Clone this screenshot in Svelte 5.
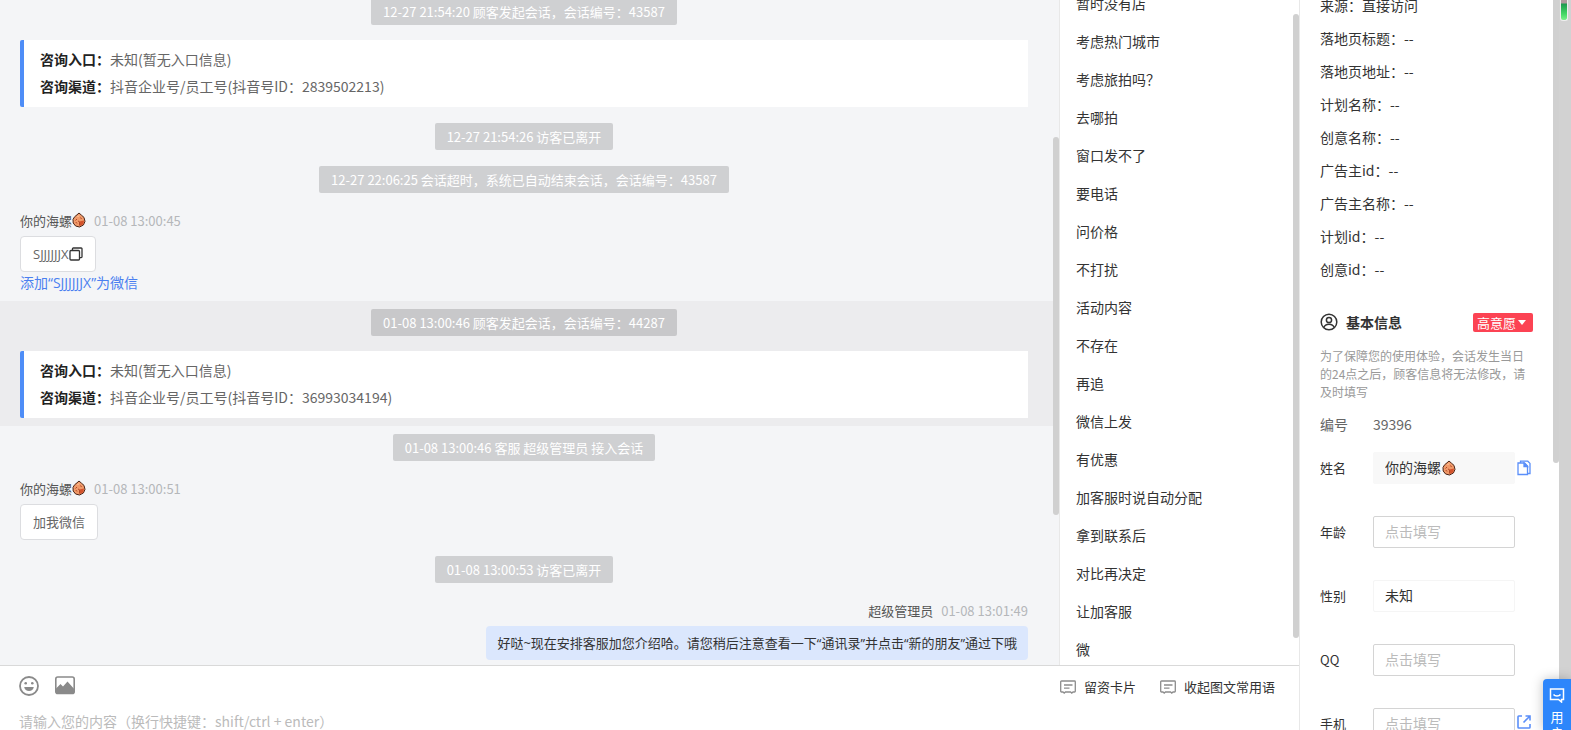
<script lang="ts">
  let draft = '';
  let nickname = '你的海螺';
  let gender = '未知';

  const entries = [
    { kind: 'notice', text: '12-27 21:54:20 顾客发起会话，会话编号：43587' },
    { kind: 'source', id: '2839502213' },
    { kind: 'notice', text: '12-27 21:54:26 访客已离开' },
    { kind: 'notice', text: '12-27 22:06:25 会话超时，系统已自动结束会话，会话编号：43587' },
    { kind: 'guest', time: '01-08 13:00:45', text: 'SJJJJJJX', contact: true },
    { kind: 'notice', text: '01-08 13:00:46 顾客发起会话，会话编号：44287', active: true },
    { kind: 'source', id: '36993034194', active: true },
    { kind: 'notice', text: '01-08 13:00:46 客服 超级管理员 接入会话' },
    { kind: 'guest', time: '01-08 13:00:51', text: '加我微信' },
    { kind: 'notice', text: '01-08 13:00:53 访客已离开' },
    {
      kind: 'staff',
      time: '01-08 13:01:49',
      text: '好哒~现在安排客服加您介绍哈。请您稍后注意查看一下“通讯录”并点击“新的朋友”通过下哦',
    },
  ];

  const phrases = [
    '暂时没有店',
    '考虑热门城市',
    '考虑旅拍吗？',
    '去哪拍',
    '窗口发不了',
    '要电话',
    '问价格',
    '不打扰',
    '活动内容',
    '不存在',
    '再追',
    '微信上发',
    '有优惠',
    '加客服时说自动分配',
    '拿到联系后',
    '对比再决定',
    '让加客服',
    '微',
  ];

  const visit = [
    ['来源', '直接访问'],
    ['落地页标题', '--'],
    ['落地页地址', '--'],
    ['计划名称', '--'],
    ['创意名称', '--'],
    ['广告主id', '--'],
    ['广告主名称', '--'],
    ['计划id', '--'],
    ['创意id', '--'],
  ];
</script>

{#snippet shell()}
  <svg class="shell" viewBox="0 0 14 16" width="14" height="16">
    <path
      d="M7 1 9.500 3.200 12 5.400l1 4-1.600 3.600L7.500 15 3.600 14 1.200 11 1 7.400 2.600 4.800 5 2.800z"
      fill="#f09a6a"
      stroke="#4a2416"
    />
    <path d="M7.500 9.500 12 8.500l-.6 3.800L7.800 14z" fill="#d4532c" />
    <path d="M3.500 8.500 5 7M5 11.500 3.800 10M8.500 5.500l1 1.500M7.500 9.500v4M6 9l1 .5" stroke="#b0492a" fill="none" />
    <path d="M5.500 5 7 3.500" stroke="#ffd3ac" fill="none" />
  </svg>
{/snippet}

{#snippet cardIcon()}
  <svg viewBox="0 0 16 16" width="16" height="16" fill="none" stroke="#8c8c8c" stroke-width="1.3">
    <path d="M1.500 2h13a.8.8 0 0 1 .8.8v9.400a.8.8 0 0 1-.8.8h-1.500l-1.200 1.200L10.600 13H5.400l-1.200 1.200L3 13H1.500a.8.8 0 0 1-.8-.8V2.800A.8.8 0 0 1 1.500 2z" />
    <path d="M4 6h8.500M4 9.200h5.500" />
  </svg>
{/snippet}

<div class="app">
  <main>
    <div class="top">
      <section class="chat">
        <div class="stream">
          {#each entries as entry}
            <div class="row {entry.kind}" class:active={entry.active}>
              {#if entry.kind === 'notice'}
                <span class="pill">{entry.text}</span>
              {:else if entry.kind === 'source'}
                <div class="card">
                  <p><b>咨询入口：</b>未知(暂无入口信息)</p>
                  <p><b>咨询渠道：</b>抖音企业号/员工号(抖音号ID：{entry.id})</p>
                </div>
              {:else}
                <div class="meta">
                  {#if entry.kind === 'guest'}
                    <span>你的海螺</span>{@render shell()}
                  {:else}
                    <span>超级管理员</span>
                  {/if}
                  <time>{entry.time}</time>
                </div>
                <div class="bubble">
                  {entry.text}{#if entry.contact}<button class="copy" aria-label="复制">
                      <svg viewBox="0 0 14 14" width="14" height="14" fill="none" stroke="#333" stroke-width="1.3">
                        <rect x="1" y="3.500" width="9.500" height="9.500" rx="1" />
                        <path d="M3.500 3.500V1.800A.8.8 0 0 1 4.300 1h7.900a.8.8 0 0 1 .8.8v8a.8.8 0 0 1-.8.8h-1.700" />
                      </svg>
                    </button>{/if}
                </div>
                {#if entry.contact}
                  <a href="#wechat">添加“{entry.text}”为微信</a>
                {/if}
              {/if}
            </div>
          {/each}
        </div>
        <i class="thumb chat-thumb"></i>
      </section>

      <aside class="phrases">
        <ul>
          {#each phrases as phrase}
            <li><button>{phrase}</button></li>
          {/each}
        </ul>
        <i class="thumb phrase-thumb"></i>
      </aside>
    </div>

    <footer>
      <div class="tools">
        <button aria-label="表情">
          <svg viewBox="0 0 20 20" width="20" height="20" fill="none" stroke="#8a8a8a" stroke-width="1.800">
            <circle cx="10" cy="10" r="9" />
            <circle cx="6.700" cy="7.300" r="1.300" fill="#8a8a8a" stroke="none" />
            <circle cx="13.300" cy="7.300" r="1.300" fill="#8a8a8a" stroke="none" />
            <path d="M5.200 11h9.600c-.4 2.500-2.300 4-4.800 4s-4.400-1.500-4.800-4z" fill="#8a8a8a" stroke="none" />
          </svg>
        </button>
        <button aria-label="图片">
          <svg viewBox="0 0 20 20" width="20" height="20">
            <rect x=".8" y="1" width="18.400" height="16.400" rx="2" fill="none" stroke="#8a8a8a" stroke-width="1.600" />
            <path d="M1 12.500 5.500 8l2.500 2.500L12.500 5.500l6.700 7.500v4.500H1z" fill="#8a8a8a" />
          </svg>
        </button>
        <span class="spacer"></span>
        <button class="text">{@render cardIcon()}留资卡片</button>
        <button class="text">{@render cardIcon()}收起图文常用语</button>
      </div>
      <textarea
        bind:value={draft}
        rows="1"
        aria-label="消息"
        placeholder="请输入您的内容（换行快捷键：shift/ctrl + enter）"
      ></textarea>
    </footer>
  </main>

  <aside class="info">
    <dl class="visit">
      {#each visit as [name, value]}
        <div><dt>{name}：</dt><dd>{value}</dd></div>
      {/each}
    </dl>

    <header>
      <svg viewBox="0 0 18 18" width="18" height="18" fill="none" stroke="#333" stroke-width="1.500">
        <circle cx="9" cy="9" r="7.800" />
        <circle cx="9" cy="7" r="2.600" />
        <path d="M3.800 14.500c.8-2.200 2.700-3.300 5.200-3.300s4.400 1.100 5.200 3.300" />
      </svg>
      <h2>基本信息</h2>
      <button class="tag">高意愿<i></i></button>
    </header>
    <p class="hint">为了保障您的使用体验，会话发生当日的24点之后，顾客信息将无法修改，请及时填写</p>
    <p class="number"><span>编号</span>39396</p>

    <form>
      <div class="field">
        <label for="nickname">姓名</label>
        <div class="control">
          <input id="nickname" class="filled" bind:value={nickname} />
          <span class="suffix">{@render shell()}</span>
        </div>
        <button type="button" aria-label="复制姓名">
          <svg viewBox="0 0 14 16" width="14" height="16" fill="none" stroke="#5b8ff9" stroke-width="1.300">
            <path d="M1 3h6.500L10.500 6v8.500H1z" />
            <path d="M7 3v3.500h3.500z" fill="#5b8ff9" />
            <path d="M3.500 3V1.200h7.300L13 3.400V13.500h-2.500" />
          </svg>
        </button>
      </div>
      <div class="field">
        <label for="age">年龄</label>
        <div class="control"><input id="age" placeholder="点击填写" /></div>
      </div>
      <div class="field">
        <label for="gender">性别</label>
        <div class="control">
          <select id="gender" bind:value={gender}>
            <option>未知</option>
            <option>男</option>
            <option>女</option>
          </select>
        </div>
      </div>
      <div class="field">
        <label for="qq">QQ</label>
        <div class="control"><input id="qq" placeholder="点击填写" /></div>
      </div>
      <div class="field">
        <label for="phone">手机</label>
        <div class="control"><input id="phone" placeholder="点击填写" /></div>
        <button type="button" aria-label="查看手机">
          <svg viewBox="0 0 14 18" width="14" height="18" fill="none" stroke="#5b8ff9" stroke-width="1.600">
            <path d="M5 1H1.800a.8.8 0 0 0-.8.8v10.400a.8.8 0 0 0 .8.8h10.400a.8.8 0 0 0 .8-.8V9" />
            <path d="M8.500 1H13v4.500M13 1 6.500 7.500" />
          </svg>
        </button>
      </div>
    </form>
    <i class="thumb info-thumb"></i>
  </aside>

  <div class="edge"><i class="battery"></i></div>

  <button class="feedback">
    <svg viewBox="0 0 16 16" width="16" height="16" fill="none" stroke="#fff" stroke-width="1.500">
      <path d="M1.500 2h13v10.500h-2V15l-3-2.500h-8z" />
      <path d="M4.500 7.500c1.500 2 5.500 2 7 0" />
    </svg>
    <span>用</span><span>户</span>
  </button>
</div>

<style>
  :global(body) {
    margin: 0;
    overflow: hidden;
  }
  .app,
  .app button,
  .app input,
  .app select,
  .app textarea {
    font-family: 'Noto Sans CJK SC', 'Open Sans', sans-serif;
    font-size: 14px;
  }
  .app {
    display: flex;
    position: relative;
    height: 100vh;
    overflow: hidden;
    color: #333;
    background: #fff;
  }
  button {
    padding: 0;
    border: 0;
    background: none;
    color: inherit;
    cursor: pointer;
  }
  svg {
    display: block;
    flex: none;
  }
  p,
  h2,
  ul,
  dl,
  dd {
    margin: 0;
    padding: 0;
  }
  .thumb {
    position: absolute;
    right: 0;
    width: 6px;
    border-radius: 3px;
    background: #d0d0d0;
  }
  main {
    display: flex;
    flex-direction: column;
    flex: 1;
    min-width: 0;
    border-right: 1px solid #e8e8e8;
  }
  .top {
    display: flex;
    flex: 1;
    min-height: 0;
  }

  /* conversation */
  .chat {
    position: relative;
    flex: 1;
    overflow: hidden;
    background: #f4f5f7;
  }
  .stream {
    margin-top: -10px;
  }
  .row {
    display: flex;
    flex-direction: column;
    align-items: flex-start;
    padding: 8px 31px 8px 20px;
  }
  .row.active {
    background: #ececee;
  }
  .row.notice {
    align-items: center;
  }
  .row.source {
    padding-top: 7px;
  }
  .row.staff {
    align-items: flex-end;
  }
  .pill {
    padding: 0 12px;
    border-radius: 2px;
    background: rgba(0, 0, 0, 0.15);
    color: #fff;
    font-size: 13px;
    line-height: 27px;
  }
  .card {
    align-self: stretch;
    padding: 6px 16px 7px;
    border-left: 4px solid #4e8df7;
    border-radius: 2px 0 0 2px;
    background: #fff;
    color: #666;
    line-height: 27px;
  }
  .card b {
    color: #222;
  }
  .meta {
    display: flex;
    align-items: center;
    height: 22px;
    margin-bottom: 5px;
    color: #555;
    font-size: 13px;
  }
  .meta time {
    margin-left: 8px;
    color: #b5b7ba;
  }
  .bubble {
    display: flex;
    align-items: center;
    padding: 0 12px;
    border: 1px solid #dcdde0;
    border-radius: 4px;
    background: #fff;
    color: #666;
    font-family: 'Open Sans', 'Noto Sans CJK SC', sans-serif;
    font-size: 13px;
    line-height: 34px;
  }
  .staff .bubble {
    padding: 0 11px;
    border: 0;
    background: #dbe7fd;
    color: #333;
  }
  .row a {
    color: #4a7ff0;
    font-family: 'Open Sans', 'Noto Sans CJK SC', sans-serif;
    line-height: 21px;
    text-decoration: none;
  }
  .chat-thumb {
    top: 137px;
    height: 378px;
  }

  /* quick phrases */
  .phrases {
    position: relative;
    flex: none;
    box-sizing: border-box;
    width: 240px;
    overflow: hidden;
    border-left: 1px solid #e8e8e8;
  }
  .phrases ul {
    margin-top: -16px;
    list-style: none;
  }
  .phrases button {
    width: 100%;
    padding: 0 16px;
    line-height: 38px;
    text-align: left;
  }
  .phrases li {
    height: 38px;
  }
  .phrase-thumb {
    top: 14px;
    height: 624px;
  }

  /* composer */
  footer {
    box-sizing: border-box;
    height: 65px;
    overflow: hidden;
    border-top: 1px solid #d9d9d9;
  }
  .tools {
    display: flex;
    align-items: center;
    gap: 16px;
    height: 39px;
    padding: 0 24px 0 19px;
  }
  .tools .spacer {
    flex: 1;
  }
  .tools .text {
    display: flex;
    align-items: center;
    gap: 8px;
    margin-top: 2px;
    margin-left: 8px;
    font-size: 13px;
  }
  textarea {
    box-sizing: border-box;
    display: block;
    width: 100%;
    padding: 6px 19px;
    border: 0;
    outline: 0;
    resize: none;
    line-height: 20px;
    overflow: hidden;
  }
  textarea::placeholder,
  input::placeholder {
    color: #bbb;
  }

  /* customer details */
  .info {
    position: relative;
    flex: none;
    box-sizing: border-box;
    width: 259px;
    padding: 0 26px 0 20px;
    overflow: hidden;
  }
  .visit {
    margin-top: -11px;
    line-height: 33px;
  }
  .visit div {
    display: flex;
  }
  header {
    display: flex;
    align-items: center;
    height: 24px;
    margin-top: 24px;
  }
  h2 {
    flex: 1;
    margin-left: 8px;
    font-size: 14px;
    line-height: 24px;
  }
  .info .tag {
    display: flex;
    align-items: center;
    gap: 2px;
    height: 19px;
    padding: 0 7px 0 4px;
    border-radius: 2px;
    background: #fc4353;
    color: #fff;
    font-size: 13px;
  }
  .tag i {
    border: 4px solid transparent;
    border-top: 5px solid #fff;
    border-bottom: 0;
  }
  .hint {
    margin-top: 13px;
    color: #999;
    font-size: 12px;
    line-height: 18px;
  }
  .number {
    display: flex;
    margin-top: 11px;
    color: #666;
    line-height: 24px;
  }
  .number span {
    width: 53px;
  }
  form {
    display: flex;
    flex-direction: column;
    gap: 32px;
    margin-top: 16px;
  }
  .field {
    display: flex;
    align-items: center;
    height: 32px;
  }
  .field label {
    width: 53px;
    padding-bottom: 2px;
    font-size: 13px;
  }
  .control {
    position: relative;
    flex: none;
    width: 142px;
  }
  .control input,
  .control select {
    display: block;
    box-sizing: border-box;
    width: 100%;
    height: 32px;
    padding: 0 11px 2px;
    border: 1px solid #d4d4d4;
    border-radius: 2px;
    outline: 0;
    background: #fff;
    color: #333;
  }
  .control select {
    border-color: #f5f5f5;
    appearance: none;
  }
  .control .filled {
    border-color: #f8f8f8;
    background: #f8f8f8;
  }
  .suffix {
    position: absolute;
    top: 8px;
    left: 69px;
  }
  .field button {
    margin-left: 2px;
  }
  .info-thumb {
    top: -8px;
    height: 471px;
  }

  .edge {
    flex: none;
    width: 12px;
    background: #d2d2d2;
  }
  .battery {
    display: block;
    width: 6px;
    height: 20px;
    margin-left: 1px;
    border: 1px solid #eee;
    border-top: 0;
    border-radius: 0 0 3px 3px;
    background: linear-gradient(#b09a9e 0 3px, #1f9a50 4px, #45d865 14px, #7cf08c);
  }
  .feedback {
    position: absolute;
    right: 0;
    bottom: 0;
    display: flex;
    flex-direction: column;
    align-items: center;
    width: 28px;
    height: 51px;
    padding-top: 8px;
    overflow: hidden;
    border-radius: 4px 0 0 0;
    background: #2d86fb;
    box-shadow: 0 0 12px rgba(0, 0, 0, 0.25);
    color: #fff;
  }
  .app .feedback span {
    flex: none;
    font-size: 13px;
    line-height: 16px;
  }
  .feedback svg {
    margin-bottom: 6px;
  }
</style>
